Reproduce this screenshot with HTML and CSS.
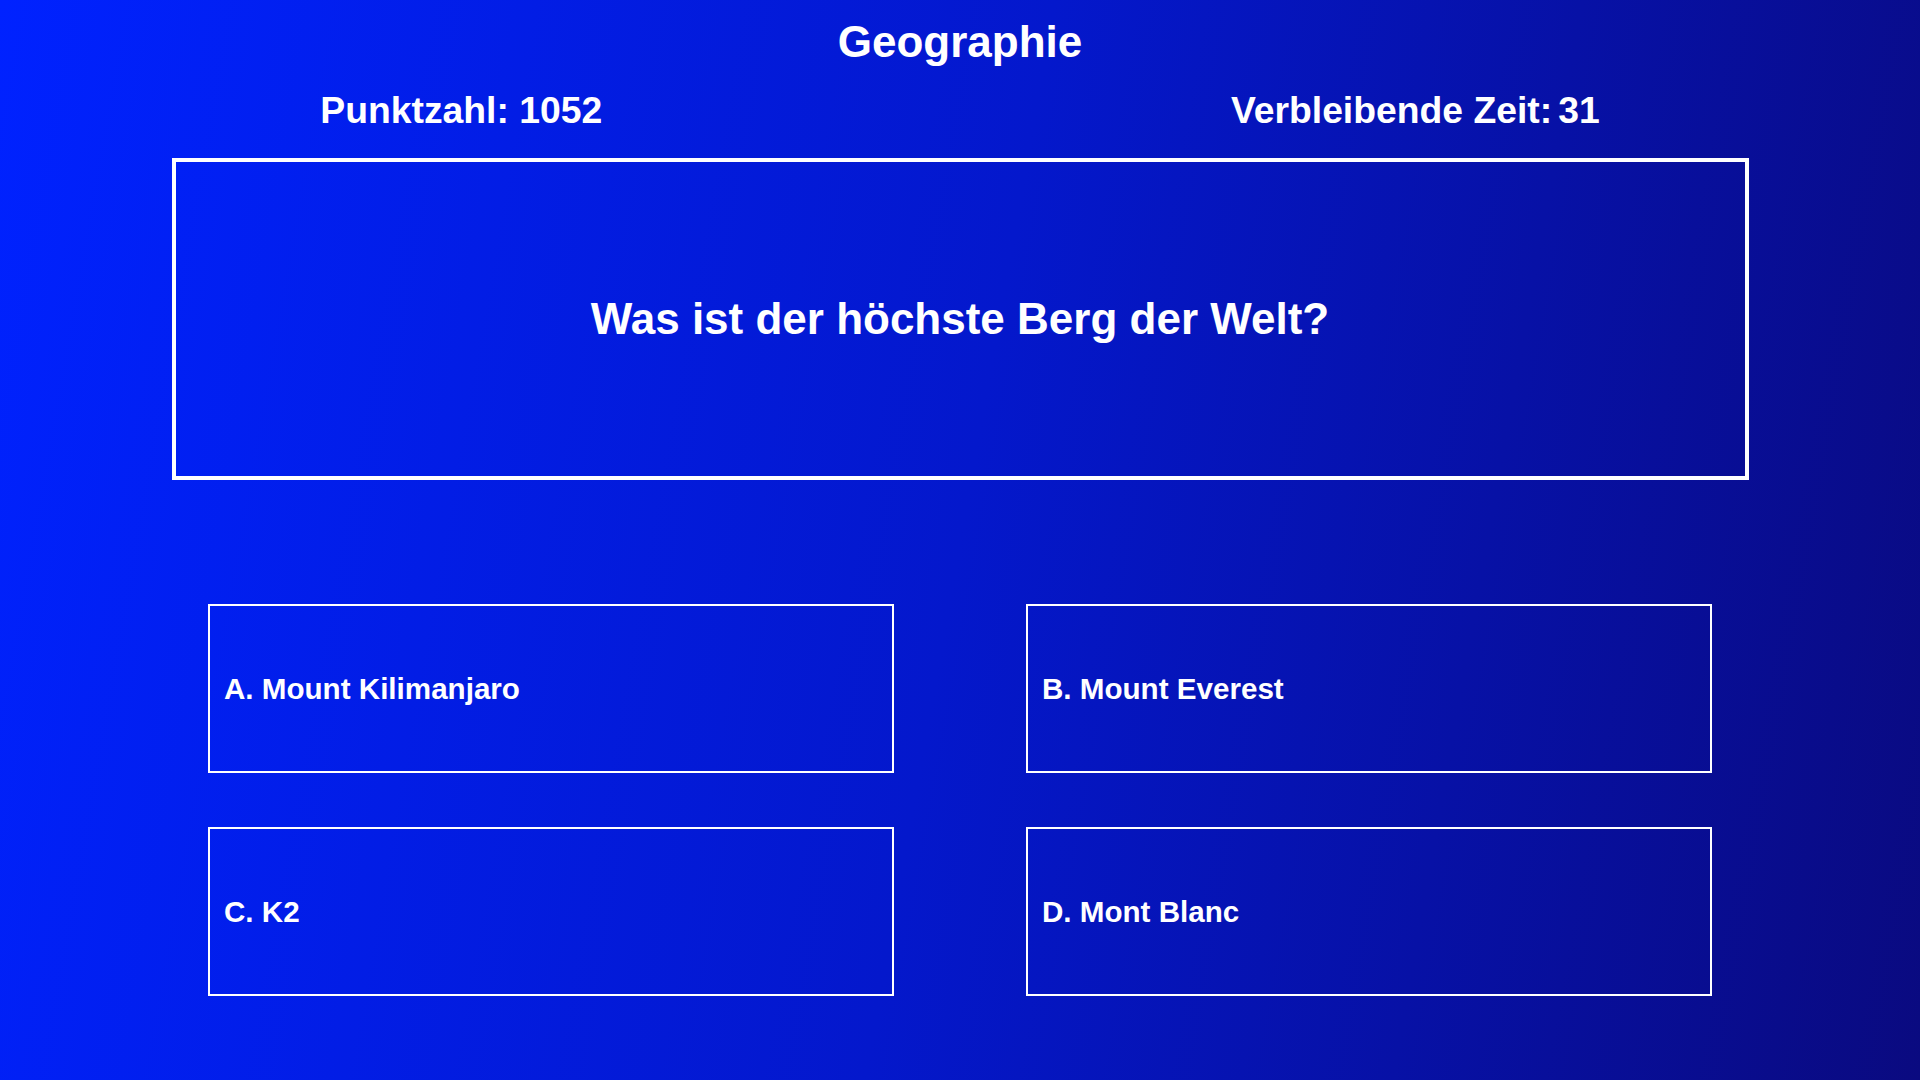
FILE: index.html
```html
<!DOCTYPE html>
<html lang="de">
<head>
<meta charset="utf-8">
<title>Geographie Quiz</title>
<link rel="stylesheet" href="styles.css">
</head>
<body>
<main class="quiz">
  <h1 class="category">Geographie</h1>
  <div class="status">
    <div class="score">Punktzahl: 1052</div>
    <div class="timer"><span>Verbleibende Zeit:</span><span class="time">31</span></div>
  </div>
  <section class="question">
    <h2 class="question-text">Was ist der höchste Berg der Welt?</h2>
  </section>
  <section class="answers">
    <button class="answer">A. Mount Kilimanjaro</button>
    <button class="answer">B. Mount Everest</button>
    <button class="answer">C. K2</button>
    <button class="answer">D. Mont Blanc</button>
  </section>
</main>
</body>
</html>
```
FILE: styles.css
```css
html, body {
  margin: 0;
  padding: 0;
  height: 100%;
}

body {
  background: linear-gradient(100deg, #0022ff 0%, #0418cc 50%, #0a0a80 100%);
  color: #ffffff;
  font-family: "Liberation Sans", Arial, Helvetica, sans-serif;
  font-weight: bold;
  overflow: hidden;
}

.quiz {
  display: flex;
  flex-direction: column;
  align-items: center;
  padding-top: 17px;
}

.category {
  margin: 0;
  font-size: 44px;
  line-height: 1.15;
  font-weight: bold;
}

.status {
  align-self: stretch;
  display: flex;
  justify-content: space-around;
  margin-top: 21px;
  padding: 0 6px;
  font-size: 37.3px;
  line-height: 1.15;
}

.timer {
  display: flex;
  gap: 6px;
}

.question {
  box-sizing: border-box;
  width: 1577px;
  height: 322px;
  margin-top: 27px;
  border: 4px solid #ffffff;
  display: flex;
  align-items: center;
  justify-content: center;
}

.question-text {
  margin: 0;
  font-size: 44px;
  line-height: 1.15;
  font-weight: bold;
}

.answers {
  display: grid;
  grid-template-columns: 686px 686px;
  grid-auto-rows: 169px;
  column-gap: 132px;
  row-gap: 54px;
  margin-top: 124px;
}

.answer {
  box-sizing: border-box;
  display: flex;
  align-items: center;
  padding: 0 14px;
  background: transparent;
  border: 2px solid #ffffff;
  color: #ffffff;
  font-family: inherit;
  font-weight: bold;
  font-size: 29.6px;
  text-align: left;
  cursor: pointer;
}
```
